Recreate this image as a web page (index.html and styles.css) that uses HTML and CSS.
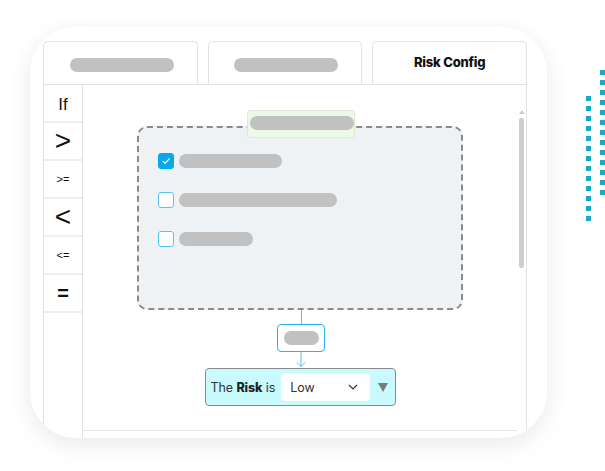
FILE: index.html
```html
<!DOCTYPE html>
<html lang="en">
<head>
  <meta charset="UTF-8" />
  <meta name="viewport" content="width=device-width, initial-scale=1.0">
  <title>Risk Config</title>
  <link rel="stylesheet" href="styles.css">
</head>
<body>
  <div class="stage">
    <div class="card">
      <div class="frame">
        <div class="tabs">
          <div class="tab"><span class="pill tab-pill"></span></div>
          <div class="tab"><span class="pill tab-pill"></span></div>
          <div class="tab active">Risk Config</div>
        </div>

        <div class="panel">
          <ul class="ops">
            <li class="op op-if">If</li>
            <li class="op op-big">&gt;</li>
            <li class="op op-small">&gt;=</li>
            <li class="op op-big">&lt;</li>
            <li class="op op-small">&lt;=</li>
            <li class="op op-eq">=</li>
          </ul>

          <div class="canvas">
            <div class="flow">
              <div class="group">
                <div class="group-label"><span class="pill label-pill"></span></div>
                <div class="check-row">
                  <span class="checkbox checked">
                    <svg width="10" height="10" viewBox="0 0 10 10"><path d="M2 5.3 L4.1 7.3 L8.2 2.8" fill="none" stroke="#fff" stroke-width="1.2" stroke-linecap="round" stroke-linejoin="round"/></svg>
                  </span>
                  <span class="pill w-103"></span>
                </div>
                <div class="check-row">
                  <span class="checkbox"></span>
                  <span class="pill w-158"></span>
                </div>
                <div class="check-row">
                  <span class="checkbox"></span>
                  <span class="pill w-74"></span>
                </div>
              </div>

              <div class="link"></div>
              <div class="node"><span class="pill node-pill"></span></div>
              <svg class="arrow" width="12" height="16" viewBox="0 0 12 16">
                <path d="M6 0 V14.5 M1.8 10.5 L6 14.5 L10.2 10.5" fill="none" stroke="#4cc3f2" stroke-width="1"/>
              </svg>

              <div class="result">
                <span class="result-text">The <b>Risk</b> is</span>
                <div class="select">
                  <span>Low</span>
                  <svg width="10" height="6" viewBox="0 0 10 6"><path d="M1 1 L5 5 L9 1" fill="none" stroke="#333" stroke-width="1.2"/></svg>
                </div>
                <span class="caret"></span>
              </div>
            </div>

            <div class="scrollbar">
              <span class="scroll-up"></span>
              <span class="scroll-thumb"></span>
            </div>
          </div>
        </div>
      </div>
    </div>

    <div class="dots dots-a"></div>
    <div class="dots dots-b"></div>
  </div>
</body>
</html>
```

FILE: styles.css
```css
body {
  margin: 0;
  background: #fff;
  font-family: 'Inter', 'Open Sans', sans-serif;
  color: #222;
}
.stage {
  display: flex;
  align-items: flex-start;
  padding: 27px 0 0 30px;
  height: 471px;
  box-sizing: border-box;
  overflow: hidden;
}
.card {
  width: 517px;
  height: 411px;
  box-sizing: border-box;
  padding: 14px 20px 0 13px;
  background: #fff;
  border-radius: 46px;
  box-shadow: 0 6px 24px rgba(0, 0, 0, 0.09);
  overflow: hidden;
  flex-shrink: 0;
}
.frame {
  display: flex;
  flex-direction: column;
  height: 100%;
}

/* Tabs */
.tabs {
  display: grid;
  grid-template-columns: repeat(3, 1fr);
  gap: 10px;
  height: 43px;
}
.tab {
  border: 1px solid #e2e2e2;
  border-bottom: none;
  border-radius: 5px 5px 0 0;
  display: flex;
  align-items: center;
  justify-content: center;
}
.tab.active {
  font-size: 13px;
  font-weight: 800;
  color: #111;
  letter-spacing: -0.2px;
  padding-bottom: 2px;
}
.pill {
  display: block;
  height: 14px;
  border-radius: 7px;
  background: #c1c1c1;
}
.tab-pill {
  width: 104px;
  margin-top: 3px;
  margin-left: 3px;
}

/* Panel */
.panel {
  flex: 1;
  display: flex;
  border: 1px solid #e2e2e2;
  border-bottom: none;
}
.ops {
  list-style: none;
  margin: 0;
  padding: 0;
  width: 38px;
  border-right: 1px solid #e2e2e2;
  font-family: 'Liberation Sans', Arial, sans-serif;
}
.op {
  height: 36px;
  border-bottom: 2px solid #eeeeee;
  display: flex;
  align-items: center;
  justify-content: center;
  color: #111;
}
.op-if { font-size: 17px; padding-top: 3px; height: 33px; }
.op-big { font-size: 28px; line-height: 1; }
.op-small { font-size: 11px; }
.op-eq { font-size: 20px; font-weight: bold; }

.canvas {
  flex: 1;
  display: flex;
}
.flow {
  flex: 1;
  height: 346px;
  box-sizing: border-box;
  border-bottom: 1px solid #e2e2e2;
  display: flex;
  flex-direction: column;
  align-items: center;
  padding-top: 41px;
}

/* Group box */
.group {
  position: relative;
  width: 326px;
  height: 184px;
  box-sizing: border-box;
  border: 2px dashed #8a8a8a;
  border-radius: 10px;
  background: #eff2f5;
  padding: 25px 0 0 19px;
  display: flex;
  flex-direction: column;
  gap: 23px;
}
.group-label {
  position: absolute;
  top: -18px;
  left: 108px;
  width: 108px;
  height: 28px;
  box-sizing: border-box;
  background: #edf9e7;
  border: 1px solid #dde8d9;
  border-radius: 3px;
  padding: 5px 2px 0;
}
.label-pill { width: 104px; }
.check-row {
  display: flex;
  align-items: center;
  gap: 5px;
}
.checkbox {
  width: 16px;
  height: 16px;
  box-sizing: border-box;
  border: 1px solid #55c4f5;
  border-radius: 3px;
  background: #fff;
  display: flex;
  align-items: center;
  justify-content: center;
}
.checkbox.checked {
  background: #0aa7e9;
  border-color: #0aa7e9;
}
.w-103 { width: 103px; }
.w-158 { width: 158px; }
.w-74 { width: 74px; }

/* Connector */
.link {
  width: 1px;
  height: 14px;
  background: #4cc3f2;
  margin-left: 2px;
}
.node {
  width: 48px;
  height: 28px;
  box-sizing: border-box;
  border: 1px solid #25b4ef;
  border-radius: 4px;
  display: flex;
  align-items: center;
  justify-content: center;
  margin-left: 2px;
}
.node-pill { width: 35px; }
.arrow {
  display: block;
  margin-left: 2px;
}

/* Result */
.result {
  width: 191px;
  height: 38px;
  box-sizing: border-box;
  background: #c9fafd;
  border: 1px solid #8a8a8a;
  border-radius: 4px;
  display: flex;
  align-items: center;
  padding: 0 4px 0 5px;
  font-size: 12.5px;
  color: #333;
  white-space: nowrap;
}
.result-text { flex-shrink: 0; letter-spacing: -0.1px; }
.result b { color: #222; font-weight: 800; }
.select {
  flex-shrink: 0;
  width: 89px;
  height: 28px;
  box-sizing: border-box;
  margin-left: 6px;
  background: #fff;
  border-radius: 4px;
  display: flex;
  align-items: center;
  justify-content: space-between;
  padding: 0 12px 0 9px;
}
.caret {
  flex-shrink: 0;
  width: 0;
  height: 0;
  margin-left: 8px;
  border-left: 5px solid transparent;
  border-right: 5px solid transparent;
  border-top: 9px solid #7a7a7a;
}

/* Scrollbar */
.scrollbar {
  width: 9px;
  display: flex;
  flex-direction: column;
  align-items: center;
  padding-top: 25px;
}
.scroll-up {
  width: 0;
  height: 0;
  border-left: 3px solid transparent;
  border-right: 3px solid transparent;
  border-bottom: 4px solid #cccccc;
}
.scroll-thumb {
  width: 5px;
  height: 150px;
  margin-top: 4px;
  border-radius: 2px;
  background: #cfcfcf;
}

/* Decoration */
.dots {
  width: 5px;
  height: 125px;
  flex-shrink: 0;
  background: repeating-linear-gradient(to bottom, #1aa8c4 0 5px, transparent 5px 10px);
}
.dots-a {
  margin-left: 39px;
  margin-top: 69px;
}
.dots-b {
  margin-left: 9px;
  margin-top: 43px;
}
```
